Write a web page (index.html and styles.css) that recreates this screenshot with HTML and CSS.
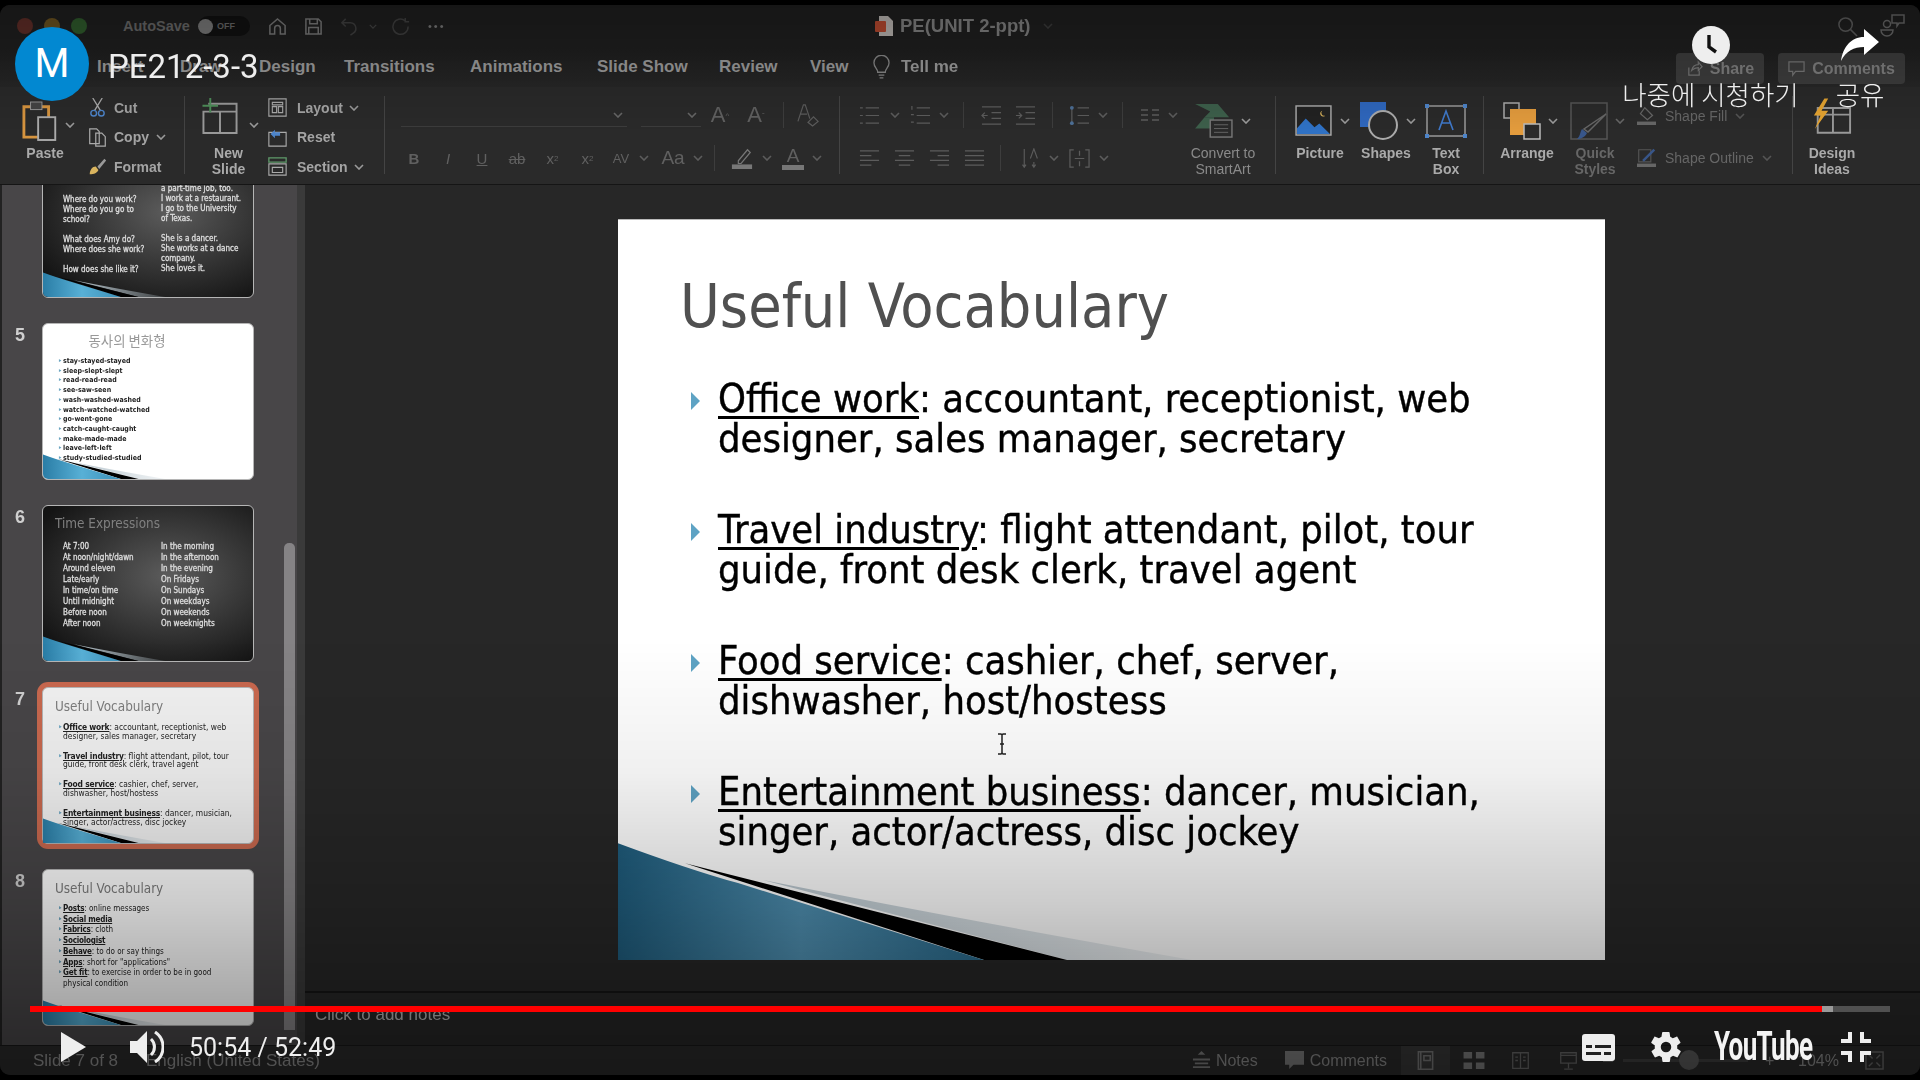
FILE: index.html
```html
<!DOCTYPE html>
<html lang="en">
<head>
    <meta charset="UTF-8">
    <meta name="viewport" content="width=device-width, initial-scale=1.0">
    <title>PE212-3-3</title>
    <link rel="stylesheet" href="styles.css">
</head>
<body>
    <svg class="defs" width="0" height="0">
        <defs>
            <linearGradient id="blueMain" x1="0" x2="1" y1="0" y2="0">
                <stop offset="0" stop-color="#1f5c7c"/>
                <stop offset="0.5" stop-color="#4f8fb0"/>
                <stop offset="1" stop-color="#2a6a8c"/>
            </linearGradient>
            <linearGradient id="blueThumb" x1="0" x2="1" y1="0" y2="0">
                <stop offset="0" stop-color="#2a7da6"/>
                <stop offset="0.5" stop-color="#58b0d6"/>
                <stop offset="1" stop-color="#3c90b8"/>
            </linearGradient>
            <linearGradient id="paleSwoosh" x1="0" x2="1" y1="0" y2="0">
                <stop offset="0" stop-color="#b8c6ce"/>
                <stop offset="1" stop-color="#b8c6ce" stop-opacity="0.2"/>
            </linearGradient>
        </defs>
        <symbol id="swoosh" viewBox="0 0 987 741" preserveAspectRatio="none">
            <path d="M145 661 Q340 700 574 741 L449 741 Z" fill="url(#paleSwoosh)"/>
            <path d="M67 644 L449 741 L366 741 Z" fill="#000"/>
            <path d="M0 624 Q70 650 120 664 L366 741 L0 741 Z" fill="url(#blueMain)"/>
        </symbol>
        <symbol id="swooshThumb" viewBox="0 0 987 741" preserveAspectRatio="none">
            <path d="M145 661 Q340 700 574 741 L449 741 Z" fill="url(#paleSwoosh)"/>
            <path d="M67 644 L449 741 L366 741 Z" fill="#000"/>
            <path d="M0 624 Q70 650 120 664 L366 741 L0 741 Z" fill="url(#blueThumb)"/>
        </symbol>
        <symbol id="chev" viewBox="0 0 10 6">
            <path d="M1 1l4 4 4-4" fill="none" stroke="currentColor" stroke-width="1.6"/>
        </symbol>
    </svg>

    <div class="app">
        <header class="titlebar">
            <div class="lights">
                <span class="light red"></span>
                <span class="light yellow"></span>
                <span class="light green"></span>
            </div>
            <span class="autosave">AutoSave</span>
            <span class="toggle"><i></i>OFF</span>
            <svg class="qa qa-home" viewBox="0 0 20 20"><path d="M2 9l8-7 8 7v9h-5v-6a3 3 0 0 0-6 0v6H2z"/></svg>
            <svg class="qa qa-save" viewBox="0 0 20 20"><path d="M2 2h13l3 3v13H2zM6 2v5h8V2M5 18v-7h10v7"/></svg>
            <svg class="qa qa-undo dim" viewBox="0 0 20 20"><path d="M6 2L2 6l4 4M2 6h9a6 6 0 0 1 3 11l-3 2"/></svg>
            <svg class="qa-chev dim" viewBox="0 0 10 6"><use href="#chev"/></svg>
            <svg class="qa qa-redo dim" viewBox="0 0 20 20"><path d="M15 4a8 8 0 1 0 3 6M15 1v4h4"/></svg>
            <span class="dots">•••</span>
            <div class="doc-title">
                <svg class="doc-icon" viewBox="0 0 18 20"><path d="M4 0h9l5 5v15H4z" fill="#b9b4b0"/><rect x="0" y="5" width="11" height="11" rx="1" fill="#b6492f"/></svg>
                <span>PE(UNIT 2-ppt)</span>
                <svg class="doc-chev" viewBox="0 0 10 6"><use href="#chev"/></svg>
            </div>
            <div class="title-right">
                <svg class="search" viewBox="0 0 22 22"><circle cx="9" cy="9" r="7"/><path d="M14 14l7 7"/></svg>
                <svg class="people" viewBox="0 0 26 26"><circle cx="7" cy="11" r="3.5"/><path d="M1 17h12a6 6 0 0 1-12 0z"/><path d="M12 2h12v8h-5l-2 3v-3h-5z"/></svg>
            </div>
        </header>

        <nav class="tabs">
            <span class="tab t-insert">Insert</span>
            <span class="tab t-draw">Draw</span>
            <span class="tab t-design">Design</span>
            <span class="tab t-trans">Transitions</span>
            <span class="tab t-anim">Animations</span>
            <span class="tab t-show">Slide Show</span>
            <span class="tab t-review">Review</span>
            <span class="tab t-view">View</span>
            <svg class="bulb" viewBox="0 0 18 26"><path d="M5 18c0-4-4-5-4-10a8 8 0 0 1 16 0c0 5-4 6-4 10zM6 21h6M7 24h4"/></svg>
            <span class="tab">Tell me</span>
            <div class="tab-actions">
                <span class="tab-btn btn-share">
                    <svg viewBox="0 0 18 18"><path d="M3 8v8h11v-5M6 11c1-4 4-6 7-6V2l4 5-4 4V8c-3 0-5 1-7 3z"/></svg>Share
                </span>
                <span class="tab-btn btn-comments">
                    <svg viewBox="0 0 18 18"><path d="M1 2h16v10H8l-3 4v-4H1z"/></svg>Comments
                </span>
            </div>
        </nav>

        <section class="ribbon">
            <div class="rb-group g-clip">
                <div class="big-btn paste">
                    <svg class="ic-paste" viewBox="0 0 40 42">
                        <path d="M2 38V6h26v32z" fill="none" stroke="#d6943f" stroke-width="3"/>
                        <rect x="9" y="1" width="12" height="8" fill="#444" stroke="#999"/>
                        <rect x="17" y="17" width="18" height="24" fill="#2a2a2a" stroke="#aaa" stroke-width="2"/>
                    </svg>
                    <span class="rb-label">Paste</span>
                </div>
                <svg class="chev c-paste" viewBox="0 0 10 6"><use href="#chev"/></svg>
                <div class="stack">
                    <div class="mini"><svg viewBox="0 0 16 20"><path d="M3 0l8 13M13 0L5 13" stroke="#aaa" fill="none" stroke-width="1.4"/><circle cx="4" cy="16" r="3" stroke="#4d84c9" fill="none" stroke-width="1.5"/><circle cx="12" cy="16" r="3" stroke="#4d84c9" fill="none" stroke-width="1.5"/></svg><span>Cut</span></div>
                    <div class="mini"><svg viewBox="0 0 20 22"><path d="M1 1h8l3 3v14H1zM8 6h7l4 4v11H8z" stroke="#aaa" fill="#2a2a2a" stroke-width="1.4"/></svg><span>Copy</span><svg class="chev" viewBox="0 0 10 6"><use href="#chev"/></svg></div>
                    <div class="mini"><svg viewBox="0 0 22 22"><path d="M2 20c0-5 3-9 7-9l3 4c-1 3-5 5-10 5z" fill="#d9b45e"/><path d="M11 11l8-9 2 2-8 10z" fill="#999"/></svg><span>Format</span></div>
                </div>
            </div>

            <div class="rb-group g-slides">
                <div class="big-btn new-slide">
                    <svg class="ic-new" viewBox="0 0 40 38">
                        <path d="M3 14h34v22H3zM8 6h29v8M20 14v22" fill="none" stroke="#999" stroke-width="2"/>
                        <path d="M10 0v15M2 8h16" stroke="#4f8f5a" stroke-width="2"/>
                    </svg>
                    <span class="rb-label">New<br>Slide</span>
                </div>
                <svg class="chev c-new" viewBox="0 0 10 6"><use href="#chev"/></svg>
                <div class="stack stack-slide">
                    <div class="mini"><svg viewBox="0 0 22 22"><path d="M1 1h20v20H1zM5 5h12v3H5zM5 10h5v7H5zM12 10h5v7h-5z" fill="none" stroke="#aaa" stroke-width="1.3"/></svg><span>Layout</span><svg class="chev" viewBox="0 0 10 6"><use href="#chev"/></svg></div>
                    <div class="mini"><svg viewBox="0 0 22 22"><path d="M1 5h20v16H1z" fill="none" stroke="#aaa" stroke-width="1.3"/><path d="M3 7l5-5v3h6v4H8v3z" fill="#4d84c9"/></svg><span>Reset</span></div>
                    <div class="mini"><svg viewBox="0 0 22 22"><path d="M1 1h20v5H1z" fill="none" stroke="#5f9a6a" stroke-width="1.5"/><path d="M1 8h20v13H1zM5 12h12v6H5z" fill="none" stroke="#aaa" stroke-width="1.3"/></svg><span>Section</span><svg class="chev" viewBox="0 0 10 6"><use href="#chev"/></svg></div>
                </div>
            </div>

            <div class="rb-group g-font">
                <div class="tool-row row-top">
                    <div class="select sel-font"><svg class="chev" viewBox="0 0 10 6"><use href="#chev"/></svg></div>
                    <div class="select sel-size"><svg class="chev" viewBox="0 0 10 6"><use href="#chev"/></svg></div>
                    <span class="cell w38 glyph big">A<sup>^</sup></span>
                    <span class="cell w34 glyph big">A<sup>ˇ</sup></span>
                    <span class="cell w20"><i class="vline"></i></span>
                    <span class="cell w30"><svg class="ic24 lines" viewBox="0 0 24 26"><path d="M1 20L7 2h2l5 15M4 12h7"/><path d="M12 21l6-6 5 5-6 5z"/></svg></span>
                </div>
                <div class="tool-row">
                    <span class="cell w34 glyph b">B</span>
                    <span class="cell w34 glyph it">I</span>
                    <span class="cell w34 glyph ul">U</span>
                    <span class="cell w36 glyph st">ab</span>
                    <span class="cell w35 glyph">x<sup>2</sup></span>
                    <span class="cell w35 glyph">x<sub>2</sub></span>
                    <span class="cell w32 glyph av">AV</span>
                    <span class="cell w14"><svg class="chev" viewBox="0 0 10 6"><use href="#chev"/></svg></span>
                    <span class="cell w44 glyph mid">Aa</span>
                    <span class="cell w6"><svg class="chev" viewBox="0 0 10 6"><use href="#chev"/></svg></span>
                    <span class="cell w26"><i class="vline"></i></span>
                    <span class="cell w30"><svg class="ic24" viewBox="0 0 24 24"><path d="M8 15L18 3l3 3-10 12H8z" fill="none" stroke="#777" stroke-width="1.3"/><rect x="1" y="19" width="22" height="5" fill="#777"/></svg></span>
                    <span class="cell w20"><svg class="chev" viewBox="0 0 10 6"><use href="#chev"/></svg></span>
                    <span class="cell w32 underbar glyph mid">A</span>
                    <span class="cell w16"><svg class="chev" viewBox="0 0 10 6"><use href="#chev"/></svg></span>
                </div>
            </div>

            <div class="rb-group g-para">
                <div class="para-rows">
                    <div class="tool-row">
                        <span class="cell w36"><svg class="ic22 lines" viewBox="0 0 22 22"><path d="M7 3h14M7 11h14M7 19h14M1 3h3M1 11h3M1 19h3"/></svg></span>
                        <span class="cell w15"><svg class="chev" viewBox="0 0 10 6"><use href="#chev"/></svg></span>
                        <span class="cell w36"><svg class="ic22 lines" viewBox="0 0 22 22"><path d="M7 3h14M7 11h14M7 19h14M2 1v4M1 10h3M1 18h3"/></svg></span>
                        <span class="cell w12"><svg class="chev" viewBox="0 0 10 6"><use href="#chev"/></svg></span>
                        <span class="cell w26"><i class="vline"></i></span>
                        <span class="cell w30"><svg class="ic22 lines" viewBox="0 0 22 22"><path d="M1 2h20M11 8h10M11 14h10M1 20h20M7 11H1M4 8l-3 3 3 3"/></svg></span>
                        <span class="cell w38"><svg class="ic22 lines" viewBox="0 0 22 22"><path d="M1 2h20M11 8h10M11 14h10M1 20h20M1 11h6M4 8l3 3-3 3"/></svg></span>
                        <span class="cell w16"><i class="vline"></i></span>
                        <span class="cell w38"><svg class="ic22 lines" viewBox="0 0 22 22"><path d="M9 3h12M9 11h12M9 19h12M3 2v18"/><circle cx="3" cy="3" r="2" fill="#4d6f96" stroke="none"/><circle cx="3" cy="19" r="2" fill="#4d6f96" stroke="none"/></svg></span>
                        <span class="cell w10"><svg class="chev" viewBox="0 0 10 6"><use href="#chev"/></svg></span>
                        <span class="cell w28"><i class="vline"></i></span>
                        <span class="cell w28"><svg class="ic18 lines" viewBox="0 0 18 14"><path d="M0 2h7M11 2h7M0 7h7M11 7h7M0 12h7M11 12h7"/></svg></span>
                        <span class="cell w18"><svg class="chev" viewBox="0 0 10 6"><use href="#chev"/></svg></span>
                    </div>
                    <div class="tool-row">
                        <span class="cell w36"><svg class="ic22 lines" viewBox="0 0 22 22"><path d="M1 3h20M1 8h12M1 13h20M1 18h12"/></svg></span>
                        <span class="cell w35"><svg class="ic22 lines" viewBox="0 0 22 22"><path d="M1 3h20M5 8h12M1 13h20M5 18h12"/></svg></span>
                        <span class="cell w35"><svg class="ic22 lines" viewBox="0 0 22 22"><path d="M1 3h20M9 8h12M1 13h20M9 18h12"/></svg></span>
                        <span class="cell w35"><svg class="ic22 lines" viewBox="0 0 22 22"><path d="M1 3h20M1 8h20M1 13h20M1 18h20"/></svg></span>
                        <span class="cell w16"><i class="vline"></i></span>
                        <span class="cell w42"><svg class="ic22 lines" viewBox="0 0 18 24"><path d="M3 1v21M1 19l2 3 2-3M14 16v6M12 19l2 3 2-3M10 12l4-11 4 11"/></svg></span>
                        <span class="cell w8"><svg class="chev" viewBox="0 0 10 6"><use href="#chev"/></svg></span>
                        <span class="cell w42"><svg class="ic22 lines" viewBox="0 0 22 22"><path d="M5 2H1v18h4M17 2h4v18h-4M11 3v5M11 14v5M6 11h10"/></svg></span>
                        <span class="cell w8"><svg class="chev" viewBox="0 0 10 6"><use href="#chev"/></svg></span>
                    </div>
                </div>
                <div class="big-btn smartart">
                    <div class="icon-line">
                        <svg class="ic-smart" viewBox="0 0 40 36">
                            <path d="M0 0h24l12 14-6 0H14l-4 0 6-6z" fill="#3d5f4b"/>
                            <path d="M0 26l10-12h10v12z" fill="#3d5f4b"/>
                            <rect x="16" y="17" width="23" height="18" fill="#2a2a2a" stroke="#777" stroke-width="1.5"/>
                            <path d="M20 22h15M20 26h15M20 30h15" stroke="#666"/>
                        </svg>
                        <svg class="chev" viewBox="0 0 10 6"><use href="#chev"/></svg>
                    </div>
                    <span class="rb-label soft">Convert to<br>SmartArt</span>
                </div>
            </div>

            <div class="rb-group g-insert">
                <div class="big-btn ins-pic">
                    <div class="icon-line">
                        <svg class="ic-pic" viewBox="0 0 38 32">
                            <rect x="1" y="1" width="36" height="30" fill="#222" stroke="#aaa" stroke-width="1.5"/>
                            <path d="M2 30V24l9-10 9 9 5-4 11 11z" fill="#2f71c4"/>
                            <path d="M28 6a3 3 0 1 0 3 5 3 3 0 0 1-3-5z" fill="#d8b25c"/>
                        </svg>
                        <svg class="chev" viewBox="0 0 10 6"><use href="#chev"/></svg>
                    </div>
                    <span class="rb-label">Picture</span>
                </div>
                <div class="big-btn ins-shape">
                    <div class="icon-line">
                        <svg class="ic-shape" viewBox="0 0 38 38">
                            <rect x="0" y="0" width="26" height="25" fill="#2f67bd"/>
                            <ellipse cx="23" cy="23" rx="14" ry="14" fill="#2a2a2a" stroke="#aaa" stroke-width="2"/>
                        </svg>
                        <svg class="chev" viewBox="0 0 10 6"><use href="#chev"/></svg>
                    </div>
                    <span class="rb-label">Shapes</span>
                </div>
                <div class="big-btn ins-text">
                    <svg class="ic-textbox" viewBox="0 0 42 34">
                        <rect x="2" y="2" width="38" height="30" fill="none" stroke="#999" stroke-width="1.5"/>
                        <path d="M14 26l7-19 7 19M17 19h8" fill="none" stroke="#3f78c9" stroke-width="1.6"/>
                        <g fill="#4d84c9"><rect x="0" y="0" width="4" height="4"/><rect x="38" y="0" width="4" height="4"/><rect x="0" y="30" width="4" height="4"/><rect x="38" y="30" width="4" height="4"/></g>
                    </svg>
                    <span class="rb-label">Text<br>Box</span>
                </div>
            </div>

            <div class="rb-group g-format">
                <div class="big-btn fmt-arrange">
                    <div class="icon-line">
                        <svg class="ic-arr" viewBox="0 0 38 38">
                            <rect x="1" y="1" width="15" height="15" fill="#2a2a2a" stroke="#aaa" stroke-width="1.5"/>
                            <rect x="7" y="7" width="26" height="26" fill="#e29b3d"/>
                            <rect x="21" y="22" width="16" height="15" fill="#2a2a2a" stroke="#bbb" stroke-width="1.5"/>
                        </svg>
                        <svg class="chev" viewBox="0 0 10 6"><use href="#chev"/></svg>
                    </div>
                    <span class="rb-label">Arrange</span>
                </div>
                <div class="big-btn fmt-quick">
                    <div class="icon-line">
                        <svg class="ic-arr" viewBox="0 0 38 38">
                            <rect x="1" y="1" width="36" height="36" fill="none" stroke="#555" stroke-width="1.5"/>
                            <path d="M36 12L18 30l-4-3z" fill="none" stroke="#666" stroke-width="1.5"/>
                            <path d="M12 27l5 4c-2 4-6 6-10 6 3-2 3-7 5-10z" fill="#38568a"/>
                        </svg>
                        <svg class="chev dimmer" viewBox="0 0 10 6"><use href="#chev"/></svg>
                    </div>
                    <span class="rb-label dimmer">Quick<br>Styles</span>
                </div>
                <div class="stack stack-shape">
                    <div class="mini"><svg viewBox="0 0 22 22"><path d="M9 2l9 9-6 5-8-7z" fill="none" stroke="#666" stroke-width="1.4"/><rect y="18" width="22" height="4" fill="#666"/></svg><span>Shape Fill</span><svg class="chev" viewBox="0 0 10 6"><use href="#chev"/></svg></div>
                    <div class="mini"><svg viewBox="0 0 22 22"><path d="M2 2h14v14H2z" fill="none" stroke="#555" stroke-width="1.3"/><path d="M6 14L19 1l2 2L8 16z" fill="#38568a"/><rect y="18" width="22" height="4" fill="#666"/></svg><span>Shape Outline</span><svg class="chev" viewBox="0 0 10 6"><use href="#chev"/></svg></div>
                </div>
            </div>

            <div class="rb-group g-ideas">
                <div class="big-btn ideas">
                    <svg class="ic-ideas" viewBox="0 0 42 38">
                        <path d="M6 10h34v26H6zM22 10v26M6 17h34" fill="none" stroke="#999" stroke-width="2"/>
                        <path d="M13 0L2 18h7L3 32l14-19h-7l7-13z" fill="#e5a431"/>
                    </svg>
                    <span class="rb-label">Design<br>Ideas</span>
                </div>
            </div>
        </section>

        <main class="workspace">
            <aside class="sidebar">
                <div class="thumb-list">
                    <div class="thumb-row">
                        <span class="thumb-num"></span>
                        <div class="thumb thumb-dark">
                            <div class="thumb-cols cols-4">
                                <div>
                                    <p class="gap-4a">Where do you work?</p>
                                    <p>Where do you go to<br>school?</p>
                                    <p class="gap-4b">What does Amy do?</p>
                                    <p>Where does she work?</p>
                                    <p class="gap-4c">How does she like it?</p>
                                </div>
                                <div>
                                    <p>a part-time job, too.</p>
                                    <p>I work at a restaurant.</p>
                                    <p>I go to the University<br>of Texas.</p>
                                    <p class="gap-4b">She is a dancer.</p>
                                    <p>She works at a dance<br>company.</p>
                                    <p>She loves it.</p>
                                </div>
                            </div>
                            <svg class="thumb-swoosh"><use href="#swooshThumb"/></svg>
                        </div>
                    </div>
                    <div class="thumb-row">
                        <span class="thumb-num">5</span>
                        <div class="thumb">
                            <h4 class="thumb-title centered">동사의 변화형</h4>
                            <ul class="thumb-bul tight bold">
                                <li>stay-stayed-stayed</li>
                                <li>sleep-slept-slept</li>
                                <li>read-read-read</li>
                                <li>see-saw-seen</li>
                                <li>wash-washed-washed</li>
                                <li>watch-watched-watched</li>
                                <li>go-went-gone</li>
                                <li>catch-caught-caught</li>
                                <li>make-made-made</li>
                                <li>leave-left-left</li>
                                <li>study-studied-studied</li>
                            </ul>
                            <svg class="thumb-swoosh"><use href="#swooshThumb"/></svg>
                        </div>
                    </div>
                    <div class="thumb-row">
                        <span class="thumb-num">6</span>
                        <div class="thumb thumb-dark">
                            <h4 class="thumb-title">Time Expressions</h4>
                            <div class="thumb-cols cols-6">
                                <div>
                                    <p>At 7:00</p>
                                    <p>At noon/night/dawn</p>
                                    <p>Around eleven</p>
                                    <p>Late/early</p>
                                    <p>In time/on time</p>
                                    <p>Until midnight</p>
                                    <p>Before noon</p>
                                    <p>After noon</p>
                                </div>
                                <div>
                                    <p>In the morning</p>
                                    <p>In the afternoon</p>
                                    <p>In the evening</p>
                                    <p>On Fridays</p>
                                    <p>On Sundays</p>
                                    <p>On weekdays</p>
                                    <p>On weekends</p>
                                    <p>On weeknights</p>
                                </div>
                            </div>
                            <svg class="thumb-swoosh"><use href="#swooshThumb"/></svg>
                        </div>
                    </div>
                    <div class="thumb-row">
                        <span class="thumb-num">7</span>
                        <div class="thumb active">
                            <h4 class="thumb-title">Useful Vocabulary</h4>
                            <ul class="thumb-bul spaced">
                                <li><b>Office work</b>: accountant, receptionist, web<br>designer, sales manager, secretary</li>
                                <li><b>Travel industry</b>: flight attendant, pilot, tour<br>guide, front desk clerk, travel agent</li>
                                <li><b>Food service</b>: cashier, chef, server,<br>dishwasher, host/hostess</li>
                                <li><b>Entertainment business</b>: dancer, musician,<br>singer, actor/actress, disc jockey</li>
                            </ul>
                            <svg class="thumb-swoosh"><use href="#swooshThumb"/></svg>
                        </div>
                    </div>
                    <div class="thumb-row">
                        <span class="thumb-num">8</span>
                        <div class="thumb">
                            <h4 class="thumb-title">Useful Vocabulary</h4>
                            <ul class="thumb-bul">
                                <li><b>Posts</b>: online messages</li>
                                <li><b>Social media</b></li>
                                <li><b>Fabrics</b>: cloth</li>
                                <li><b>Sociologist</b></li>
                                <li><b>Behave</b>: to do or say things</li>
                                <li><b>Apps</b>: short for "applications"</li>
                                <li><b>Get fit</b>: to exercise in order to be in good<br>physical condition</li>
                            </ul>
                            <svg class="thumb-swoosh"><use href="#swooshThumb"/></svg>
                        </div>
                    </div>
                </div>
                <div class="scrollbar"></div>
            </aside>

            <div class="editor">
                <div class="stage">
                    <article class="slide">
                        <h1 class="slide-title">Useful Vocabulary</h1>
                        <ul class="slide-list">
                            <li><u>Office work</u>: accountant, receptionist, web<br>designer, sales manager, secretary</li>
                            <li><u>Travel industry</u>: flight attendant, pilot, tour<br>guide, front desk clerk, travel agent</li>
                            <li><u>Food service</u>: cashier, chef, server,<br>dishwasher, host/hostess</li>
                            <li><u>Entertainment business</u>: dancer, musician,<br>singer, actor/actress, disc jockey</li>
                        </ul>
                        <svg class="slide-swoosh"><use href="#swoosh"/></svg>
                        <svg class="ibeam" viewBox="0 0 10 22"><path d="M1 1h3l1 1 1-1h3M5 2v18M1 21h3l1-1 1 1h3M3 11h4"/></svg>
                    </article>
                </div>
                <div class="notes">Click to add notes</div>
            </div>
        </main>

        <footer class="statusbar">
            <span class="st-slide">Slide 7 of 8</span>
            <span class="st-lang">English (United States)</span>
            <div class="st-right">
                <svg class="st-ic st-notes" viewBox="0 0 18 20"><path d="M9 0l4 4H5zM0 8h18v2H0zM2 12h14v2H2zM0 16h18v2H0z"/></svg>
                <span class="st-text">Notes</span>
                <svg class="st-ic st-comm" viewBox="0 0 18 18"><path d="M0 0h18v13H8l-4 4v-4H0z"/></svg>
                <span class="st-text">Comments</span>
                <span class="view-box"><svg class="st-ic" viewBox="0 0 20 24"><path d="M1 1h18v22H1zM4 1v22M8 6h8v6H8z" fill="none" stroke="#777" stroke-width="2"/></svg></span>
                <svg class="st-ic st-sorter" viewBox="0 0 22 20"><path d="M0 1h9v7H0zM13 1h9v7h-9zM0 12h9v7H0zM13 12h9v7h-9z"/></svg>
                <svg class="st-ic st-read" viewBox="0 0 20 22"><path d="M1 2h18v18H1zM10 2v18M4 7h3M4 11h3M13 7h3M13 11h3" fill="none" stroke="#666" stroke-width="1.5"/></svg>
                <svg class="st-ic st-show" viewBox="0 0 20 22"><path d="M1 2h18v12H1zM10 14v6M5 21h10M1 5h18" fill="none" stroke="#666" stroke-width="1.5"/></svg>
                <i class="zoom-minus"></i>
                <div class="zoom-slider"><i></i></div>
                <span class="st-text zoom-plus">+</span>
                <span class="st-text st-zoom">104%</span>
                <svg class="st-ic st-fit" viewBox="0 0 20 20"><path d="M1 1h18v18H1z" fill="none" stroke="#666" stroke-width="1.5"/><path d="M4 4l4 4M16 4l-4 4M4 16l4-4M16 16l-4-4" stroke="#666" stroke-width="1.5"/></svg>
            </div>
        </footer>
    </div>

    <!-- video player chrome on top of the recording -->
    <div class="shade-top"></div>
    <div class="shade-bottom"></div>

    <div class="yt-avatar">M</div>
    <div class="yt-title">PE212-3-3</div>

    <div class="yt-later">
        <span class="yt-clock"><svg viewBox="0 0 38 38"><path d="M17 9v12l7 5" fill="none" stroke="#111" stroke-width="3.4"/></svg></span>
        <span class="yt-cap">나중에 시청하기</span>
    </div>
    <div class="yt-share">
        <svg class="yt-arrow" viewBox="0 0 38 32"><path d="M23 0l15 13-15 13v-8C13 18 5 22 0 32 2 18 10 8 23 8z" fill="#fff"/></svg>
        <span class="yt-cap">공유</span>
    </div>

    <div class="yt-progress">
        <div class="yt-played"></div>
        <div class="yt-buffer"></div>
    </div>

    <div class="yt-controls">
        <svg class="yt-play" viewBox="0 0 25 30"><path d="M0 0l25 15L0 30z" fill="#eee"/></svg>
        <svg class="yt-vol" viewBox="0 0 34 32"><path d="M0 10h7l10-10v32L7 22H0z" fill="#eee"/><path d="M21 8a11 11 0 0 1 0 16" fill="none" stroke="#eee" stroke-width="3"/><path d="M25 1a18 18 0 0 1 0 30" fill="none" stroke="#eee" stroke-width="3"/></svg>
        <span class="yt-time">50:54 / 52:49</span>
        <div class="yt-right">
            <svg class="yt-cc" viewBox="0 0 33 27"><rect width="33" height="27" rx="3" fill="#eee"/><path d="M4 11h6v3H4zM13 11h16v3H13zM4 18h15v3H4zM22 18h7v3h-7z" fill="#222"/></svg>
            <svg class="yt-gear" viewBox="0 0 24 24"><path fill="#eee" d="M19.4 13c.1-.3.1-.7.1-1s0-.7-.1-1l2.100-1.600c.2-.2.2-.4.1-.6l-2-3.500c-.1-.2-.4-.3-.6-.2l-2.500 1c-.5-.4-1.100-.7-1.700-1l-.4-2.600c0-.3-.2-.5-.5-.5h-4c-.3 0-.5.2-.5.5l-.4 2.600c-.6.3-1.200.6-1.700 1l-2.500-1c-.2-.1-.5 0-.6.2l-2 3.500c-.1.2-.1.4.1.6L4.600 11c-.1.3-.1.7-.1 1s0 .7.1 1l-2.100 1.600c-.2.2-.2.4-.1.6l2 3.500c.1.2.4.3.6.2l2.500-1c.5.4 1.100.7 1.700 1l.4 2.600c0 .3.2.5.5.5h4c.3 0 .5-.2.5-.5l.4-2.600c.6-.3 1.200-.6 1.700-1l2.500 1c.2.1.5 0 .6-.2l2-3.500c.1-.2.1-.4-.1-.6zM12 15.500a3.500 3.500 0 1 1 0-7 3.500 3.500 0 0 1 0 7z"/></svg>
            <span class="yt-logo">YouTube</span>
            <svg class="yt-exit" viewBox="0 0 30 30"><path d="M7 0h4v11H0V7h7zM19 0h4v7h7v4H19zM0 19h11v11H7v-7H0zM19 19h11v4h-7v7h-4z" fill="#eee"/></svg>
        </div>
    </div>
</body>
</html>
```

FILE: styles.css
```css
* {
    box-sizing: border-box;
}

html, body {
    margin: 0;
    height: 100%;
    overflow: hidden;
}

body {
    position: relative;
    background-color: #000;
    font-family: "Liberation Sans", Arial, sans-serif;
    color: #aaa;
}

.defs {
    position: absolute;
}

.app {
    margin-top: 5px;
    height: 1070px;
    display: flex;
    flex-direction: column;
    border-radius: 10px;
    overflow: hidden;
    background-color: #222;
    filter: blur(0.6px);
}

/* title bar */
.titlebar {
    height: 42px;
    flex: none;
    display: flex;
    align-items: center;
    padding-left: 17px;
    position: relative;
    background-color: #1f1f1f;
}

.lights {
    display: flex;
    gap: 11px;
    width: 106px;
}

.light {
    width: 16px;
    height: 16px;
    border-radius: 50%;
}

.red { background-color: #5e2d27; }
.yellow { background-color: #6a5220; }
.green { background-color: #2f5a2c; }

.autosave {
    font-size: 14.5px;
    font-weight: bold;
    color: #666;
    width: 75px;
}

.toggle {
    width: 52px;
    height: 20px;
    border-radius: 10px;
    background-color: #111;
    display: flex;
    align-items: center;
    gap: 4px;
    font-size: 9px;
    font-weight: bold;
    color: #666;
    margin-right: 18px;
}

.toggle i {
    width: 15px;
    height: 15px;
    border-radius: 50%;
    background-color: #777;
}

.qa {
    width: 19px;
    height: 19px;
    fill: none;
    stroke: #777;
    stroke-width: 1.6;
    margin-right: 17px;
}

.qa.dim { stroke: #3f3f3f; }
.qa-undo { margin-right: 10px; }

.qa-chev {
    width: 8px;
    height: 5px;
    color: #444;
    margin-right: 14px;
}

.qa-redo { margin-right: 18px; }

.dots {
    font-size: 11px;
    letter-spacing: 2px;
    color: #777;
}

.doc-title {
    position: absolute;
    left: 875px;
    top: 10px;
    display: flex;
    align-items: center;
    gap: 7px;
    font-size: 18.5px;
    font-weight: bold;
    color: #808080;
}

.doc-icon {
    width: 18px;
    height: 20px;
}

.doc-chev {
    width: 10px;
    height: 6px;
    margin-left: 5px;
    color: #3a3a3a;
}

.title-right {
    margin-left: auto;
    display: flex;
    align-items: center;
    gap: 22px;
    padding-right: 14px;
}

.search {
    width: 21px;
    height: 21px;
    fill: none;
    stroke: #5c5c5c;
    stroke-width: 1.6;
}

.people {
    width: 26px;
    height: 26px;
    fill: none;
    stroke: #666;
    stroke-width: 1.5;
}

/* tabs */
.tabs {
    height: 40px;
    flex: none;
    display: flex;
    align-items: center;
    padding-left: 97px;
    font-size: 17px;
    font-weight: bold;
    background: linear-gradient(#1f1f1f, #272727);
    color: #9c9c9c;
}

.t-insert { width: 83px; }
.t-draw { width: 79px; }
.t-design { width: 85px; }
.t-trans { width: 126px; }
.t-anim { width: 127px; }
.t-show { width: 122px; }
.t-review { width: 91px; }
.t-view { width: 63px; }

.bulb {
    width: 17px;
    height: 25px;
    fill: none;
    stroke: #888;
    stroke-width: 1.4;
    margin-right: 11px;
}

.tab-actions {
    margin-left: auto;
    display: flex;
    gap: 14px;
    padding-right: 15px;
    margin-top: 3px;
}

.tab-btn {
    height: 31px;
    display: flex;
    align-items: center;
    justify-content: center;
    gap: 7px;
    border-radius: 4px;
    background-color: #3d3d3d;
    font-size: 16px;
    color: #7f7f7f;
}

.tab-btn svg {
    width: 17px;
    height: 17px;
    fill: none;
    stroke: #777;
    stroke-width: 1.3;
}

.btn-share { width: 88px; }
.btn-comments { width: 127px; }

/* ribbon */
.ribbon {
    height: 98px;
    flex: none;
    display: flex;
    padding: 9px 0 10px;
    background-color: #2a2a2a;
    border-bottom: 1px solid #151515;
    font-size: 14px;
    color: #b0b0b0;
}

.rb-group {
    display: flex;
    position: relative;
    border-right: 1px solid #444;
}

.g-clip { width: 185px; padding-left: 22px; }
.g-slides { width: 200px; padding-left: 15px; }
.g-font { width: 455px; flex-direction: column; padding-left: 12px; gap: 15px; }
.g-para { width: 436px; padding-left: 11px; }
.g-insert { width: 208px; padding-left: 19px; }
.g-format { width: 309px; padding-left: 19px; }
.g-ideas { flex: 1; border-right: none; padding-left: 19px; }

.big-btn {
    display: grid;
    grid-template-columns: minmax(0, 1fr);
    grid-template-rows: 49px auto;
    justify-items: center;
    align-items: center;
    height: 81px;
    flex: none;
}

.big-btn > svg, .icon-line {
    justify-self: start;
}

.rb-label {
    align-self: start;
    text-align: center;
    white-space: nowrap;
    line-height: 16px;
    font-size: 14px;
    font-weight: bold;
    color: #aaa;
}

.rb-label.soft { color: #8a8a8a; font-weight: normal; }
.dimmer { color: #666 !important; }

.paste { width: 46px; }
.ic-paste { width: 38px; height: 40px; }
.c-paste { margin: 26px 13px 0 -3px; }

.chev {
    width: 10px;
    height: 6px;
    flex: none;
    color: #9a9a9a;
}

.stack {
    display: flex;
    flex-direction: column;
    justify-content: space-between;
    height: 78px;
    margin-top: 2px;
}

.mini {
    display: flex;
    align-items: center;
    gap: 7px;
    height: 19px;
    font-size: 14px;
    font-weight: bold;
    color: #a4a4a4;
}

.mini svg:first-child {
    width: 19px;
    height: 19px;
}

.new-slide { width: 57px; }
.ic-new { width: 40px; height: 37px; margin-top: -8px; }
.c-new { margin: 26px 9px 0 -8px; }
.stack-slide .mini { gap: 10px; }
.stack-slide .chev { margin-left: -4px; }

/* font and paragraph rows */
.tool-row {
    display: flex;
    align-items: center;
    height: 28px;
}

.g-font .tool-row:first-child { margin-top: 5px; }
.row-top { padding-left: 4px; }

.cell {
    display: flex;
    align-items: center;
    justify-content: center;
    flex: none;
    color: #606060;
}

.cell .chev { color: #5c5c5c; }

.w6 { width: 6px; }
.w8 { width: 8px; }
.w10 { width: 10px; }
.w12 { width: 12px; }
.w14 { width: 14px; }
.w15 { width: 15px; }
.w16 { width: 16px; }
.w18 { width: 18px; }
.w20 { width: 20px; }
.w26 { width: 26px; }
.w28 { width: 28px; }
.w30 { width: 30px; }
.w32 { width: 32px; }
.w34 { width: 34px; }
.w35 { width: 35px; }
.w36 { width: 36px; }
.w38 { width: 38px; }
.w42 { width: 42px; }
.w44 { width: 44px; }

.vline {
    width: 1px;
    height: 26px;
    background-color: #3d3d3d;
}

.select {
    display: flex;
    align-items: center;
    justify-content: flex-end;
    height: 24px;
    padding-right: 4px;
    border-bottom: 1px solid #3c3c3c;
}

.select .chev { color: #666; }
.sel-font { width: 226px; margin-right: 14px; }
.sel-size { width: 60px; }

.glyph {
    font-size: 15px;
    color: #606060;
}

.glyph sup, .glyph sub { font-size: 8px; }
.glyph.big { font-size: 22px; }
.glyph.mid { font-size: 19px; }
.glyph.b { font-weight: bold; }
.glyph.it { font-style: italic; }
.glyph.ul { text-decoration: underline; }
.glyph.st { text-decoration: line-through; }
.glyph.av { font-size: 13px; }

.underbar {
    flex-direction: column;
    line-height: 18px;
}

.underbar::after {
    content: "";
    width: 22px;
    height: 5px;
    background-color: #777;
}

.ic24 { width: 22px; height: 24px; }
.ic22 { width: 21px; height: 21px; }
.ic18 { width: 18px; height: 14px; }

.lines {
    fill: none;
    stroke: #5c5c5c;
    stroke-width: 1.3;
}

.para-rows { width: 343px; }
.para-rows .tool-row:first-child { margin-top: 5px; }
.para-rows .tool-row + .tool-row { margin-top: 15px; }

.smartart { width: 58px; }
.icon-line { display: flex; align-items: center; gap: 7px; }
.ic-smart { width: 40px; height: 34px; }

.ins-pic { width: 50px; }
.ins-shape { width: 52px; margin-left: 15px; }
.ins-text { width: 42px; margin-left: 13px; }
.ins-pic .icon-line, .ins-shape .icon-line { gap: 8px; }
.ic-pic { width: 37px; height: 31px; }
.ic-shape { width: 38px; height: 38px; }
.ic-textbox { width: 42px; height: 34px; }

.fmt-arrange { width: 48px; }
.fmt-quick { width: 50px; margin-left: 19px; }
.ic-arr { width: 38px; height: 38px; }

.stack-shape { height: 61px; margin: 10px 0 0 17px; }
.stack-shape .mini { font-weight: normal; color: #666; gap: 9px; }
.stack-shape .chev { color: #555; margin-left: -1px; }

.ideas { width: 40px; }
.ic-ideas { width: 40px; height: 37px; margin-top: -8px; }

/* main area */
.workspace {
    flex: 1;
    min-height: 0;
    display: flex;
}

.sidebar {
    width: 303px;
    flex: none;
    margin-left: 2px;
    position: relative;
    overflow: hidden;
    background-color: #484648;
    border-right: 8px solid #3a3a3a;
}

.thumb-list {
    display: flex;
    flex-direction: column;
    gap: 25px;
    margin-top: -44px;
}

.thumb-row {
    display: flex;
    height: 157px;
}

.thumb-num {
    width: 40px;
    padding: 2px 0 0 13px;
    font-size: 18px;
    font-weight: bold;
    color: #cfcfcf;
}

.thumb {
    position: relative;
    width: 212px;
    height: 157px;
    flex: none;
    overflow: hidden;
    border-radius: 6px;
    border: 1px solid #b5b5b5;
    background-color: #fff;
    font-family: "DejaVu Sans Condensed", "DejaVu Sans", sans-serif;
    font-stretch: condensed;
    font-size: 8px;
    color: #222;
}

.thumb.active {
    overflow: visible;
    box-shadow: 0 0 0 5px #c9694f;
    background-color: #f2f2f2;
}

.thumb-dark {
    background: radial-gradient(ellipse at 60% 45%, #5c5c5c, #141414 85%);
    color: #ddd;
}

.thumb-title {
    margin: 0;
    padding: 11px 0 0 12px;
    font-size: 13.4px;
    font-weight: normal;
    line-height: 15px;
    color: #7d7d7d;
}

.thumb-title.centered {
    text-align: center;
    font-family: "Noto Sans CJK KR", sans-serif;
    padding: 9px 0 0 0;
    margin-left: -42px;
    color: #999;
}

.thumb-dark .thumb-title { color: #808080; padding-top: 10px; }

.thumb-bul {
    list-style: none;
    margin: 8px 0 0;
    padding: 0 0 0 20px;
    line-height: 10.7px;
    white-space: nowrap;
}

.thumb-bul li::before {
    content: "‣";
    position: absolute;
    margin-left: -5px;
    color: #6aa4c0;
}

.thumb-bul b {
    text-decoration: underline;
    letter-spacing: -0.2px;
}

.thumb-bul.tight { line-height: 9.7px; margin-top: 9px; font-size: 7px; }
.thumb-bul.bold { font-weight: bold; }

.thumb-bul.spaced { margin-top: 9px; line-height: 8.6px; font-size: 8.4px; }
.thumb-bul.spaced li { margin-bottom: 11.5px; }

.thumb-cols {
    display: flex;
    line-height: 10px;
    white-space: nowrap;
    -webkit-text-stroke: 0.3px #ddd;
}

.thumb-cols > div { width: 118px; padding-left: 20px; }
.thumb-cols > div + div { width: auto; padding-left: 0; }
.thumb-cols p { margin: 0; }

.cols-4 { padding-top: 42px; }
.cols-6 { margin-top: 10px; line-height: 11px; }
.gap-4a { padding-top: 11px; }
.gap-4b { padding-top: 10px; }
.gap-4c { padding-top: 10px; }

.thumb-swoosh {
    position: absolute;
    left: 0;
    bottom: 0;
    width: 100%;
    height: 100%;
}

.scrollbar {
    position: absolute;
    left: 282px;
    top: 358px;
    width: 11px;
    height: 487px;
    border-radius: 5px 5px 0 0;
    background-color: #858385;
}

.editor {
    flex: 1;
    min-width: 0;
    display: flex;
    flex-direction: column;
    background-color: #272727;
}

.stage {
    height: 808px;
    flex: none;
    padding: 34px 0 0 313px;
    border-bottom: 2px solid #161616;
}

.slide {
    position: relative;
    width: 987px;
    height: 741px;
    padding: 51px 0 0 62px;
    overflow: hidden;
    background-color: #fff;
    border-top: 1px solid #bbb;
    font-family: "DejaVu Sans Condensed", "DejaVu Sans", sans-serif;
    font-stretch: condensed;
}

.slide-title {
    margin: 0;
    font-size: 60.5px;
    font-weight: normal;
    line-height: 70px;
    color: #505050;
}

.slide-list {
    list-style: none;
    margin: 37px 0 0;
    padding: 0 0 0 38px;
    font-size: 39.5px;
    line-height: 40px;
    color: #000;
    -webkit-text-stroke: 0.4px #000;
}

.slide-list li {
    position: relative;
    margin-bottom: 51px;
}

.slide-list li::before {
    content: "";
    position: absolute;
    left: -27px;
    top: 14px;
    border-left: 9px solid #5ea3c4;
    border-top: 9px solid transparent;
    border-bottom: 9px solid transparent;
}

.slide-list u {
    text-underline-offset: 4px;
    text-decoration-thickness: 2.5px;
}

.slide-swoosh {
    position: absolute;
    left: 0;
    top: 0;
    width: 100%;
    height: 100%;
}

.ibeam {
    position: absolute;
    left: 379px;
    top: 513px;
    width: 10px;
    height: 22px;
    fill: none;
    stroke: #222;
    stroke-width: 1.5;
}

.notes {
    padding: 12px 0 0 10px;
    font-size: 17px;
    color: #b5b5b5;
}

/* status bar */
.statusbar {
    height: 30px;
    flex: none;
    display: flex;
    align-items: center;
    padding-left: 33px;
    background-color: #2b2b2b;
    border-top: 1px solid #181818;
    font-size: 17px;
    color: #8e8e8e;
}

.st-slide { width: 113px; }

.st-right {
    margin-left: 872px;
    display: flex;
    align-items: center;
    height: 100%;
}

.st-ic {
    width: 19px;
    height: 19px;
    fill: #7c7c7c;
    flex: none;
}

.st-text {
    font-size: 16px;
    color: #8a8a8a;
}

.st-notes { margin-right: 5px; }
.st-comm { margin: 0 6px 0 27px; }

.view-box {
    width: 49px;
    height: 100%;
    margin-left: 14px;
    display: flex;
    align-items: center;
    justify-content: center;
    background-color: #383838;
}

.st-sorter { margin-left: 13px; width: 22px; }
.st-read { margin-left: 26px; }
.st-show { margin-left: 29px; }

.zoom-minus {
    width: 10px;
    height: 2px;
    margin-left: 25px;
    background-color: #666;
}

.zoom-slider {
    width: 125px;
    height: 3px;
    margin-left: 10px;
    position: relative;
    background-color: #3f3f3f;
}

.zoom-slider i {
    position: absolute;
    left: 56px;
    top: -9px;
    width: 20px;
    height: 20px;
    border-radius: 50%;
    background-color: #5a5a5a;
}

.zoom-plus { width: 12px; margin-left: 17px; }
.st-zoom { margin-left: 21px; }
.st-fit { margin-left: 26px; }

/* video overlay */
.shade-top, .shade-bottom {
    position: absolute;
    left: 0;
    width: 100%;
    pointer-events: none;
}

.shade-top {
    top: 0;
    height: 130px;
    background: linear-gradient(rgba(0,0,0,0.28), rgba(0,0,0,0));
}

.shade-bottom {
    top: 640px;
    height: 440px;
    background: linear-gradient(rgba(0,0,0,0), rgba(0,0,0,0.06) 30%, rgba(0,0,0,0.2) 60%, rgba(0,0,0,0.45));
}

.yt-avatar {
    position: absolute;
    left: 15px;
    top: 27px;
    width: 74px;
    height: 74px;
    border-radius: 50%;
    background-color: #0288d1;
    color: #fff;
    font-family: Roboto, sans-serif;
    font-size: 40px;
    line-height: 74px;
    text-align: center;
}

.yt-title {
    position: absolute;
    left: 108px;
    top: 50px;
    font-family: Roboto, sans-serif;
    font-size: 33px;
    line-height: 34px;
    color: #eee;
}

.yt-later, .yt-share {
    position: absolute;
    display: flex;
    flex-direction: column;
    align-items: center;
    font-family: "Noto Sans CJK KR", sans-serif;
    color: #eee;
}

.yt-later { left: 1623px; top: 26px; width: 175px; }
.yt-share { left: 1838px; top: 29px; width: 44px; }

.yt-clock {
    width: 38px;
    height: 38px;
    border-radius: 50%;
    background-color: #eee;
}

.yt-clock svg {
    display: block;
    width: 100%;
    height: 100%;
}

.yt-arrow {
    width: 38px;
    height: 32px;
}

.yt-cap {
    font-size: 26.5px;
    font-weight: 300;
    line-height: 34px;
    white-space: nowrap;
    margin-top: 13px;
}

.yt-share .yt-cap { margin-top: 16px; }

.yt-progress {
    position: absolute;
    left: 30px;
    top: 1006px;
    width: 1860px;
    height: 6px;
    display: flex;
    background-color: #505050;
}

.yt-played {
    width: 1792px;
    background-color: #f00;
}

.yt-buffer {
    width: 11px;
    background-color: #999;
}

.yt-controls {
    position: absolute;
    left: 61px;
    top: 1030px;
    width: 1810px;
    height: 34px;
    display: flex;
    align-items: center;
    font-family: Roboto, sans-serif;
    color: #eee;
}

.yt-play { width: 25px; height: 30px; margin-right: 44px; }
.yt-vol { width: 34px; height: 32px; margin-right: 25px; }

.yt-time {
    font-size: 25px;
}

.yt-right {
    margin-left: auto;
    display: flex;
    align-items: center;
}

.yt-cc { width: 33px; height: 27px; margin-right: 33px; }
.yt-gear { width: 36px; height: 36px; margin-right: 30px; }

.yt-logo {
    width: 98px;
    margin-right: 29px;
    font-size: 40px;
    font-weight: bold;
    line-height: 34px;
    letter-spacing: -1px;
    white-space: nowrap;
    transform: scaleX(0.65);
    transform-origin: left center;
    color: #f4f4f4;
}

.yt-exit { width: 30px; height: 30px; }
```
